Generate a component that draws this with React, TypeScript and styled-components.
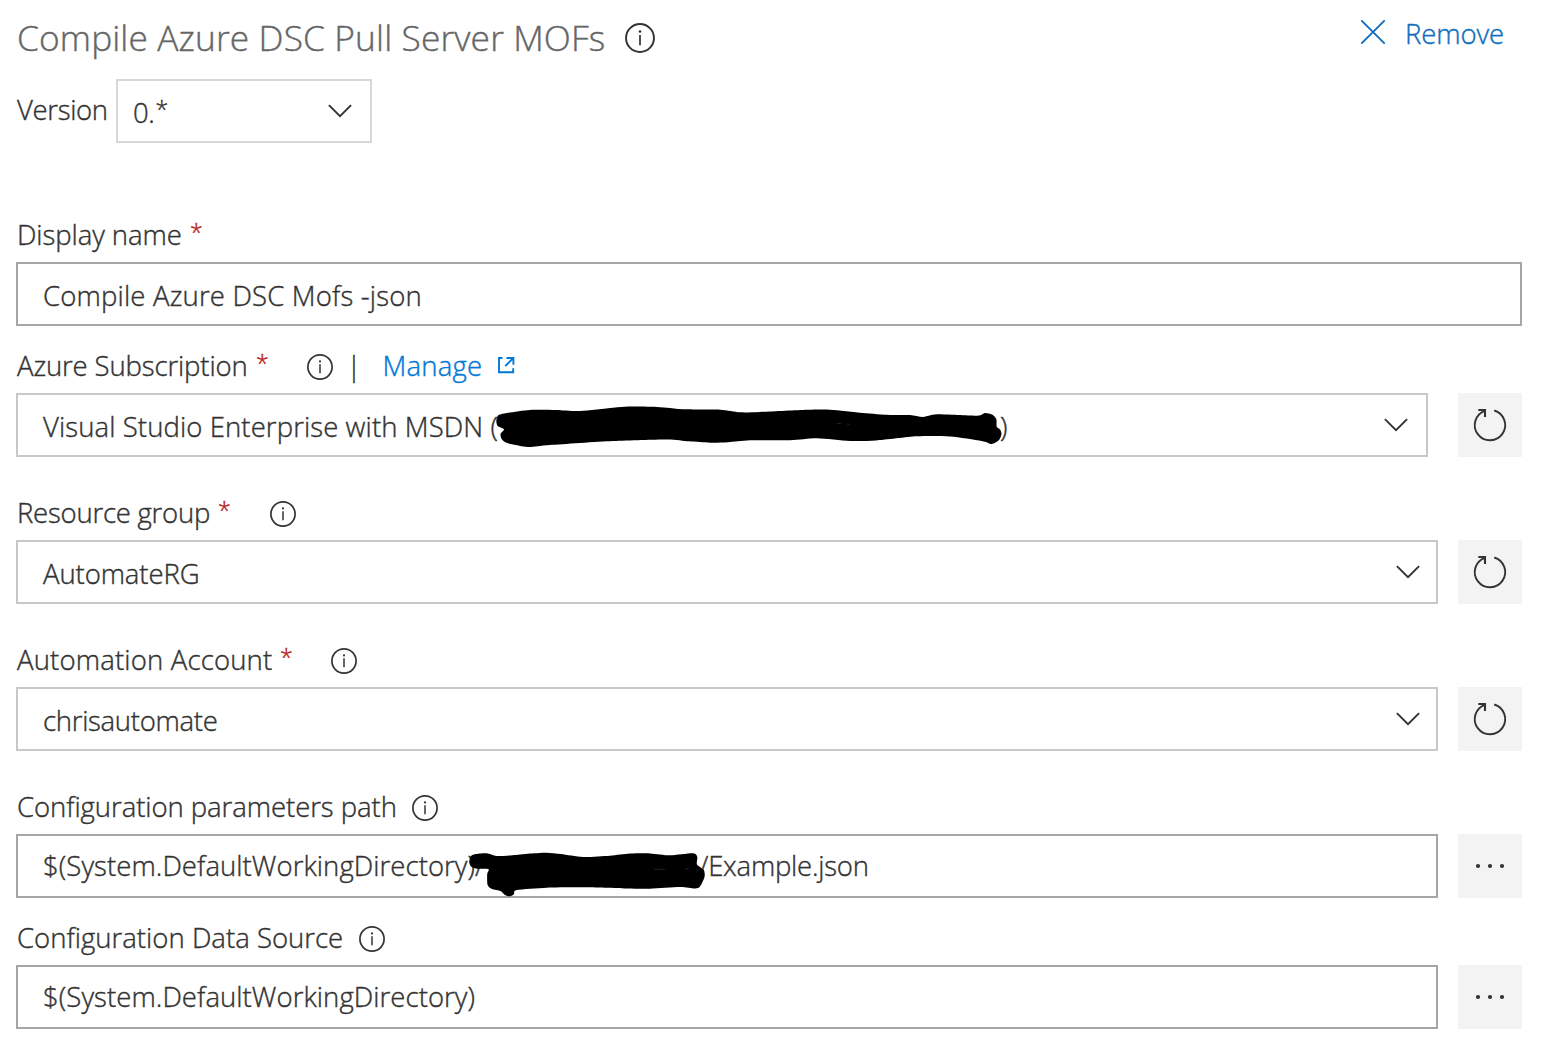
import React from 'react';
import styled, { createGlobalStyle } from 'styled-components';

const GlobalStyle = createGlobalStyle`
  * { box-sizing: border-box; }
  body {
    margin: 0;
    background: #fff;
    color: #333;
    font-family: "Open Sans", "Noto Sans", sans-serif;
    font-size: 27.5px;
    font-weight: 300;
    -webkit-text-stroke: 0.4px currentColor;
  }
`;

const Page = styled.main`
  display: flex;
  flex-direction: column;
  width: 1543px;
  height: 1058px;
  padding: 0 21px 0 16px;
  overflow: hidden;
`;

const Header = styled.header`
  display: flex;
  justify-content: space-between;
  height: 79px;
`;

const Title = styled.h1`
  display: flex;
  margin: 0;
  font-size: 35.3px;
  font-weight: 300;
  line-height: 75px;
  color: #666;
`;

const RemoveButton = styled.button`
  display: flex;
  gap: 18px;
  width: 162px;
  height: 67px;
  padding: 0;
  border: 0;
  background: none;
  font: inherit;
  line-height: 67px;
  text-align: left;
  color: #106ebe;

  svg { margin-top: 19px; }
`;

const VersionRow = styled.div`
  display: flex;
  height: 64px;
  margin-bottom: 68px;
`;

const Text = styled.span<{ $tracking?: number; $width?: number }>`
  flex: none;
  width: ${(p) => (p.$width ? `${p.$width}px` : 'auto')};
  padding-left: 1px;
  letter-spacing: ${(p) => p.$tracking ?? 0}px;
  white-space: pre;
`;

const VersionLabel = styled.label`
  width: 100px;
  line-height: 61px;
`;

const VersionSelect = styled.div`
  display: flex;
  width: 256px;
  padding: 0 18px 0 14px;
  border: 2px solid #d8d8d8;
  line-height: 63px;

  svg { margin: 23px 0 0 auto; }
`;

const Wildcard = styled.span`
  margin-left: 1px;
  font-size: 23px;
  line-height: 57px;
`;

const Field = styled.section<{ $gap: number }>`
  display: flex;
  flex-direction: column;
  margin-top: ${(p) => p.$gap}px;
`;

const LabelRow = styled.div`
  display: flex;
  height: 51px;
  line-height: 47px;
`;

const Required = styled.span`
  width: 20px;
  margin-left: 8px;
  font-size: 23px;
  line-height: 43px;
  color: #b81c1c;
`;

const InfoIcon = styled.svg<{ $top: number; $left?: number }>`
  flex: none;
  margin: ${(p) => p.$top}px 0 0 ${(p) => p.$left ?? 0}px;
`;

const Separator = styled.span`
  width: 35px;
  margin-left: 13.5px;
`;

const ManageLink = styled.a`
  display: flex;
  color: #0078d7;

  svg { margin-top: 14px; }
`;

const Controls = styled.div`
  display: flex;
  justify-content: space-between;
  height: 64px;
`;

const Box = styled.div<{ $width: number; $tone: string; $line: number }>`
  position: relative;
  display: flex;
  width: ${(p) => p.$width}px;
  padding-left: 24px;
  border: 2px solid ${(p) => p.$tone};
  line-height: ${(p) => p.$line}px;
`;

const DropArrow = styled.span<{ $right: number }>`
  display: flex;
  margin: 23px ${(p) => p.$right}px 0 auto;
`;

const SideButton = styled.button`
  width: 64px;
  height: 64px;
  padding: 0;
  border: 0;
  background: #f3f3f3;

  svg { display: block; }
`;

const Scribble = styled.svg`
  position: absolute;
  left: -2px;
  top: -2px;
  overflow: visible;
`;

type Point = [number, number];

function closedCurve(points: Point[]): string {
  const n = points.length;
  const parts = [`M${points[0][0]} ${points[0][1]}`];
  for (let i = 0; i < n; i++) {
    const a = points[(i + n - 1) % n];
    const b = points[i];
    const c = points[(i + 1) % n];
    const d = points[(i + 2) % n];
    parts.push(
      `C${b[0] + (c[0] - a[0]) / 8} ${b[1] + (c[1] - a[1]) / 8} ${c[0] - (d[0] - b[0]) / 8} ${c[1] - (d[1] - b[1]) / 8} ${c[0]} ${c[1]}`,
    );
  }
  return parts.join('') + 'Z';
}

const SUBSCRIPTION_MARK: Point[] = [
  [481.7, 23], [484, 21.5], [491, 20], [514, 17], [540, 17], [564, 18], [597, 14.7], [612, 13.6], [624, 13.4], [638, 13.8], [651, 14.7], [667, 16.3],
  [704, 16.7], [724, 19.3], [744, 19], [791, 16.8], [814, 16.7], [847, 20], [874, 22], [894, 22], [907, 24], [921, 21.3],
  [961, 22.7], [968.7, 20], [976, 21.5], [980.3, 26], [980.7, 33.5], [984, 36.5], [985.5, 41], [983, 47], [975.7, 51], [965.7, 48],
  [934, 43.5], [901, 43.3], [860, 47.5], [834, 48], [801, 45.3], [774, 47.3], [734, 47.3], [712, 49.3], [694, 49.7], [673, 48.3],
  [651, 46.4], [597, 48], [534, 52], [512, 54], [492, 50.3], [486, 46.5], [484.5, 41], [488, 36.3], [481.7, 33], [480.3, 28],
];

const PATH_MARK: Point[] = [
  [453.2, 27.7], [455, 22], [459, 20.2], [470.7, 19.3], [480.7, 22], [500, 21], [518, 19.3], [530.7, 18.7], [545, 20], [567, 23], [594, 21.7], [614, 19.6],
  [634, 19.4], [654, 21.3], [677, 19.3], [681.3, 23], [681, 30.5], [687.8, 36], [688.5, 43], [684, 52.5], [679, 54.5], [664, 53],
  [634, 54.7], [610, 54.5], [567, 53.3], [530.7, 53.7], [500.7, 56], [498, 60], [494, 62.3], [489, 61], [484.5, 57], [476, 55], [471.6, 51],
  [471.2, 40], [472.5, 35.2], [460.7, 34.7], [455, 32.5],
];

const Info = ({ large = false, top, left }: { large?: boolean; top: number; left?: number }) => (
  <InfoIcon $top={top} $left={left} width={large ? 30 : 26} height={large ? 30 : 26} viewBox="0 0 26 26" fill="none" stroke="#333">
    <circle cx="13" cy="13" r="12.1" strokeWidth="1.7" />
    <path d="M13 10.3V19.2" strokeWidth="1.5" />
    <circle cx="13" cy="7.4" r="1.1" fill="#333" stroke="none" />
  </InfoIcon>
);

const Chevron = () => (
  <svg width="24" height="14" viewBox="0 0 24 14" fill="none" stroke="#333" strokeWidth="1.9">
    <path d="M.9 1.2 12 12.2 23.1 1.2" />
  </svg>
);

const RefreshButton = () => (
  <SideButton aria-label="Refresh">
    <svg width="64" height="64" viewBox="0 0 64 64" fill="none" stroke="#333" strokeWidth="1.9">
      <path d="M36.2 17.5A15.2 15.2 0 1 1 26.8 17.8" />
      <path d="M20.3 17H27V24" strokeWidth="2.1" />
    </svg>
  </SideButton>
);

const BrowseButton = () => (
  <SideButton aria-label="Browse">
    <svg width="64" height="64" viewBox="0 0 64 64" fill="#333">
      <circle cx="20" cy="32" r="2.1" />
      <circle cx="32" cy="32" r="2.1" />
      <circle cx="44" cy="32" r="2.1" />
    </svg>
  </SideButton>
);

const DARK = '#a6a6a6';
const LIGHT = '#c8c8c8';

export default function App() {
  return (
    <>
      <GlobalStyle />
      <Page>
        <Header>
          <Title>
            <Text $tracking={0.12} $width={609.4}>Compile Azure DSC Pull Server MOFs</Text>
            <Info large top={23} />
          </Title>
          <RemoveButton>
            <svg width="26" height="26" viewBox="0 0 26 26" fill="none" stroke="#106ebe" strokeWidth="1.9">
              <path d="M1.3 1.3 24.7 24.7M24.7 1.3 1.3 24.7" />
            </svg>
            <Text $tracking={-0.1}>Remove</Text>
          </RemoveButton>
        </Header>

        <VersionRow>
          <VersionLabel><Text $tracking={-0.34}>Version</Text></VersionLabel>
          <VersionSelect>
            <Text $tracking={-0.4}>0.</Text>
            <Wildcard>*</Wildcard>
            <Chevron />
          </VersionSelect>
        </VersionRow>

        <Field $gap={0}>
          <LabelRow>
            <Text $tracking={-0.07} $width={166}>Display name</Text>
            <Required>*</Required>
          </LabelRow>
          <Controls>
            <Box $width={1506} $tone={DARK} $line={63}>
              <Text $tracking={0.18}>Compile Azure DSC Mofs -json</Text>
            </Box>
          </Controls>
        </Field>

        <Field $gap={16}>
          <LabelRow>
            <Text $tracking={-0.13} $width={232}>Azure Subscription</Text>
            <Required>*</Required>
            <Info top={12} left={31} />
            <Separator>|</Separator>
            <ManageLink>
              <Text $tracking={0.2} $width={115}>Manage</Text>
              <svg width="18" height="18" viewBox="0 0 18 18" fill="none" stroke="#0078d7" strokeWidth="1.9">
                <path d="M5.5 2H2V16.2H16.2V12.2M9.5 2H16.4V8.8M16.2 2.2 8.2 10.2" />
              </svg>
            </ManageLink>
          </LabelRow>
          <Controls>
            <Box $width={1412} $tone={LIGHT} $line={63}>
              <Text $tracking={0.1} $width={957}>Visual Studio Enterprise with MSDN (</Text>
              <Text>)</Text>
              <DropArrow $right={18}><Chevron /></DropArrow>
              <Scribble width="1412" height="64">
                <path d={closedCurve(SUBSCRIPTION_MARK)} />
                <path d="M821 30.5H825M831 31.2H834" stroke="#444" strokeWidth=".5" />
              </Scribble>
            </Box>
            <RefreshButton />
          </Controls>
        </Field>

        <Field $gap={32}>
          <LabelRow>
            <Text $tracking={-0.23} $width={194}>Resource group</Text>
            <Required>*</Required>
            <Info top={12} left={31.7} />
          </LabelRow>
          <Controls>
            <Box $width={1422} $tone={LIGHT} $line={63}>
              <Text $tracking={-0.1}>AutomateRG</Text>
              <DropArrow $right={16}><Chevron /></DropArrow>
            </Box>
            <RefreshButton />
          </Controls>
        </Field>

        <Field $gap={32}>
          <LabelRow>
            <Text $tracking={0.17} $width={256}>Automation Account</Text>
            <Required>*</Required>
            <Info top={12} left={31.3} />
          </LabelRow>
          <Controls>
            <Box $width={1422} $tone={LIGHT} $line={63}>
              <Text $tracking={-0.29}>chrisautomate</Text>
              <DropArrow $right={16}><Chevron /></DropArrow>
            </Box>
            <RefreshButton />
          </Controls>
        </Field>

        <Field $gap={32}>
          <LabelRow>
            <Text $tracking={-0.06} $width={396.3}>Configuration parameters path</Text>
            <Info top={12} />
          </LabelRow>
          <Controls>
            <Box $width={1422} $tone={DARK} $line={59}>
              <Text $tracking={0.07} $width={656}>$(System.DefaultWorkingDirectory)/</Text>
              <Text $tracking={-0.23}>/Example.json</Text>
              <Scribble width="1422" height="64">
                <path d={closedCurve(PATH_MARK)} />
                <path d="M638 35.3H649M669 34.8H673" stroke="#444" strokeWidth=".5" />
              </Scribble>
            </Box>
            <BrowseButton />
          </Controls>
        </Field>

        <Field $gap={16}>
          <LabelRow>
            <Text $tracking={0.02} $width={343.3}>Configuration Data Source</Text>
            <Info top={12} />
          </LabelRow>
          <Controls>
            <Box $width={1422} $tone={DARK} $line={59}>
              <Text $tracking={0.07}>$(System.DefaultWorkingDirectory)</Text>
            </Box>
            <BrowseButton />
          </Controls>
        </Field>
      </Page>
    </>
  );
}
